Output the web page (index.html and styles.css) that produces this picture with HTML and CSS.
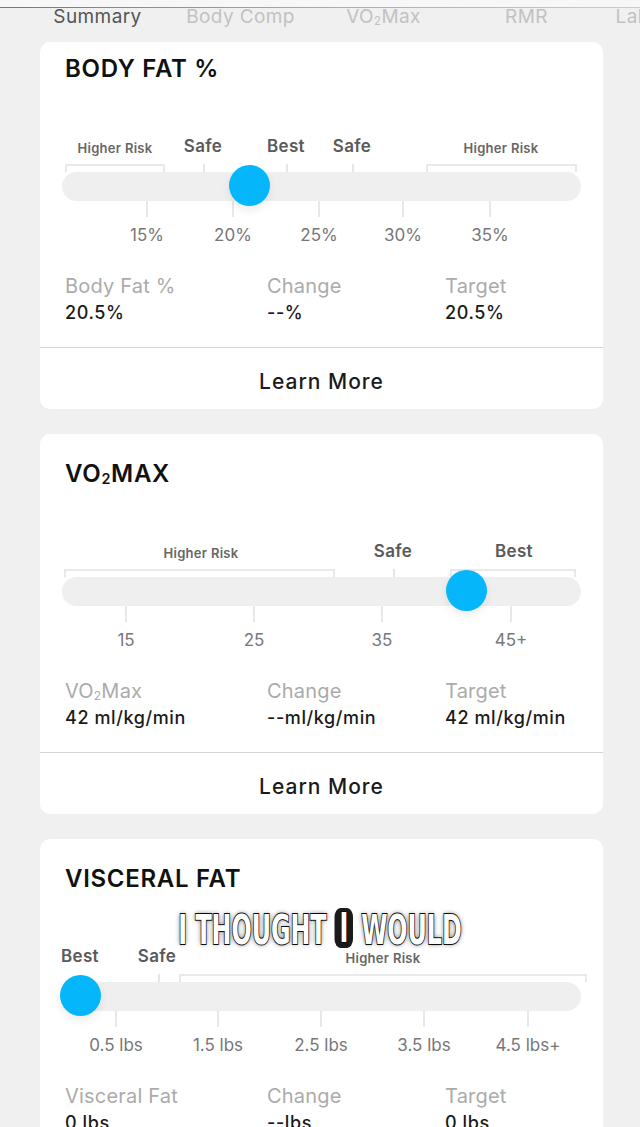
FILE: index.html
```html
<!DOCTYPE html>
<html lang="en">

<head>
    <meta charset="UTF-8">
    <meta name="viewport" content="width=device-width, initial-scale=1.0">
    <title>Summary</title>
    <link rel="stylesheet" href="styles.css">
</head>

<body>
    <div class="topline"></div>
    <nav class="tabs">
        <span class="tab active">Summary</span>
        <span class="tab">Body Comp</span>
        <span class="tab">VO<sub>2</sub>Max</span>
        <span class="tab">RMR</span>
        <span class="tab">Lab Results</span>
    </nav>

    <main class="cards">
        <!-- body fat -->
        <section class="card first">
            <h2 class="card-title">BODY FAT %</h2>
            <div class="scale">
                <span class="zone small" style="left: 53px;">Higher Risk</span>
                <span class="zone" style="left: 141px;">Safe</span>
                <span class="zone" style="left: 224px;">Best</span>
                <span class="zone" style="left: 290px;">Safe</span>
                <span class="zone small" style="left: 439px;">Higher Risk</span>

                <div class="bracket" style="left: 3px; width: 100px;"></div>
                <div class="mark" style="left: 141px;"></div>
                <div class="mark" style="left: 224px;"></div>
                <div class="mark" style="left: 290px;"></div>
                <div class="bracket" style="left: 364px; width: 151px;"></div>

                <div class="bar"></div>

                <div class="tick" style="left: 85px;"></div>
                <div class="tick" style="left: 171px;"></div>
                <div class="tick" style="left: 257px;"></div>
                <div class="tick" style="left: 341px;"></div>
                <div class="tick" style="left: 428px;"></div>
                <span class="tick-label" style="left: 85px;">15%</span>
                <span class="tick-label" style="left: 171px;">20%</span>
                <span class="tick-label" style="left: 257px;">25%</span>
                <span class="tick-label" style="left: 341px;">30%</span>
                <span class="tick-label" style="left: 428px;">35%</span>

                <div class="knob" style="left: 187px;"></div>
            </div>
            <div class="stats">
                <div>
                    <p class="stat-label">Body Fat %</p>
                    <p class="stat-value">20.5%</p>
                </div>
                <div>
                    <p class="stat-label">Change</p>
                    <p class="stat-value">--%</p>
                </div>
                <div>
                    <p class="stat-label">Target</p>
                    <p class="stat-value">20.5%</p>
                </div>
            </div>
            <div class="learn">Learn More</div>
        </section>

        <!-- vo2max -->
        <section class="card">
            <h2 class="card-title">VO<sub>2</sub>MAX</h2>
            <div class="scale">
                <span class="zone small" style="left: 139px;">Higher Risk</span>
                <span class="zone" style="left: 331px;">Safe</span>
                <span class="zone" style="left: 452px;">Best</span>

                <div class="bracket" style="left: 2px; width: 271px;"></div>
                <div class="mark" style="left: 331px;"></div>
                <div class="bracket" style="left: 388px; width: 126px;"></div>

                <div class="bar"></div>

                <div class="tick" style="left: 64px;"></div>
                <div class="tick" style="left: 192px;"></div>
                <div class="tick" style="left: 320px;"></div>
                <div class="tick" style="left: 449px;"></div>
                <span class="tick-label" style="left: 64px;">15</span>
                <span class="tick-label" style="left: 192px;">25</span>
                <span class="tick-label" style="left: 320px;">35</span>
                <span class="tick-label" style="left: 449px;">45+</span>

                <div class="knob" style="left: 404px;"></div>
            </div>
            <div class="stats">
                <div>
                    <p class="stat-label">VO<sub>2</sub>Max</p>
                    <p class="stat-value">42 ml/kg/min</p>
                </div>
                <div>
                    <p class="stat-label">Change</p>
                    <p class="stat-value">--ml/kg/min</p>
                </div>
                <div>
                    <p class="stat-label">Target</p>
                    <p class="stat-value">42 ml/kg/min</p>
                </div>
            </div>
            <div class="learn">Learn More</div>
        </section>

        <!-- visceral fat -->
        <section class="card">
            <h2 class="card-title">VISCERAL FAT</h2>
            <div class="scale">
                <span class="zone" style="left: 18px;">Best</span>
                <span class="zone" style="left: 95px;">Safe</span>
                <span class="zone small" style="left: 321px;">Higher Risk</span>

                <div class="mark" style="left: 96px;"></div>
                <div class="bracket" style="left: 117px; width: 408px;"></div>

                <div class="bar"></div>

                <div class="tick" style="left: 54px;"></div>
                <div class="tick" style="left: 156px;"></div>
                <div class="tick" style="left: 259px;"></div>
                <div class="tick" style="left: 362px;"></div>
                <div class="tick" style="left: 466px;"></div>
                <span class="tick-label" style="left: 54px;">0.5 lbs</span>
                <span class="tick-label" style="left: 156px;">1.5 lbs</span>
                <span class="tick-label" style="left: 259px;">2.5 lbs</span>
                <span class="tick-label" style="left: 362px;">3.5 lbs</span>
                <span class="tick-label" style="left: 466px;">4.5 lbs+</span>

                <div class="knob" style="left: 18px;"></div>
            </div>
            <div class="stats">
                <div>
                    <p class="stat-label">Visceral Fat</p>
                    <p class="stat-value">0 lbs</p>
                </div>
                <div>
                    <p class="stat-label">Change</p>
                    <p class="stat-value">--lbs</p>
                </div>
                <div>
                    <p class="stat-label">Target</p>
                    <p class="stat-value">0 lbs</p>
                </div>
            </div>
            <div class="learn">Learn More</div>
        </section>
    </main>

    <div class="caption">
        <span>I THOUGHT</span> <span class="hl"><span class="hl-letter">I</span></span> <span>WOULD</span>
    </div>
</body>

</html>
```

FILE: styles.css
```css
* {
    box-sizing: border-box;
}

body {
    margin: 0;
    background: #f0f0f0;
    font-family: Inter, "Noto Sans", sans-serif;
    color: #1a1a1a;
    overflow: hidden;
}

p {
    margin: 0;
}

sub {
    font-size: 0.6em;
    vertical-align: -0.15em;
    line-height: 0;
}

.topline {
    height: 8px;
    background: #f7f7f7;
    border-bottom: 1px solid #999;
    border-image: linear-gradient(to right, #777, #aaa 50%, #ccc) 1;
}

.tabs {
    display: flex;
    margin-top: -3px;
    padding-left: 26px;
    height: 28px;
    line-height: 24px;
    white-space: nowrap;
    overflow: hidden;
}

.tab {
    flex: 0 0 143px;
    text-align: center;
    font-size: 19px;
    letter-spacing: 0.4px;
    color: #c2c2c2;
}

.tab.active {
    color: #555;
}

.cards {
    padding-top: 9px;
}

.card {
    width: 563px;
    margin: 0 0 25px 40px;
    background: #fff;
    border-radius: 10px;
}

.card-title {
    margin: 0;
    padding: 27px 25px 0;
    font-size: 24px;
    line-height: 26px;
    font-weight: 600;
    letter-spacing: 0.7px;
    color: #111;
}

.card.first .card-title {
    padding-top: 14px;
}

/* gauge */
.scale {
    position: relative;
    height: 120px;
    margin: 53px 22px 0;
}

.zone {
    position: absolute;
    top: 0;
    transform: translateX(-50%);
    line-height: 22px;
    font-size: 17px;
    font-weight: 600;
    letter-spacing: 0.3px;
    color: #5a5a5a;
    white-space: nowrap;
}

.zone.small {
    top: 2px;
    font-size: 13px;
    letter-spacing: 0.3px;
    color: #666;
}

.bracket {
    position: absolute;
    top: 29px;
    height: 8px;
    border: 2px solid #e9e9e9;
    border-bottom: none;
}

.mark {
    position: absolute;
    top: 29px;
    width: 2px;
    height: 8px;
    background: #e6e6e6;
}

.bar {
    position: absolute;
    top: 37px;
    left: 0;
    right: 0;
    height: 29px;
    border-radius: 15px;
    background: #efefef;
}

.tick {
    position: absolute;
    top: 66px;
    width: 2px;
    height: 16px;
    margin-left: -1px;
    background: #e8e8e8;
}

.tick-label {
    position: absolute;
    top: 90px;
    transform: translateX(-50%);
    line-height: 20px;
    font-size: 17px;
    color: #777;
    white-space: nowrap;
}

.knob {
    position: absolute;
    top: 30px;
    width: 41px;
    height: 41px;
    margin-left: -20px;
    border-radius: 50%;
    background: #05b6fb;
    box-shadow: 0 4px 10px rgba(0, 0, 0, 0.08);
}

/* numbers */
.stats {
    display: grid;
    grid-template-columns: 202px 178px 1fr;
    padding: 0 25px;
    margin-top: 20px;
}

.stat-label {
    font-size: 20px;
    line-height: 22px;
    letter-spacing: 0.2px;
    color: #ababab;
}

.stat-value {
    margin-top: 5px;
    font-size: 18px;
    line-height: 22px;
    font-weight: 500;
    letter-spacing: 0.6px;
    color: #1a1a1a;
}

.learn {
    margin-top: 23px;
    border-top: 1px solid #d4d4d4;
    height: 62px;
    padding-top: 5px;
    line-height: 58px;
    text-align: center;
    font-size: 21px;
    font-weight: 500;
    letter-spacing: 1px;
    color: #1a1a1a;
}

/* subtitle overlay */
.caption {
    position: absolute;
    top: 904px;
    left: 0;
    right: 0;
    text-align: center;
    font-family: "DejaVu Sans Condensed", "DejaVu Sans", sans-serif;
    font-weight: bold;
    font-size: 40px;
    line-height: 52px;
    color: #fff;
    -webkit-text-stroke: 2px #111;
    paint-order: stroke fill;
    text-shadow: 0 0 6px rgba(0, 0, 0, 0.6);
    transform: scaleX(0.66);
    white-space: nowrap;
}

.caption .hl {
    display: inline-block;
    background: #1a1a1a;
    border-radius: 9px;
    padding: 0 7px;
    line-height: 40px;
    vertical-align: 2px;
    text-shadow: none;
}

.caption .hl-letter {
    color: #ffffff;
    -webkit-text-stroke: 1px #000;
}
```
